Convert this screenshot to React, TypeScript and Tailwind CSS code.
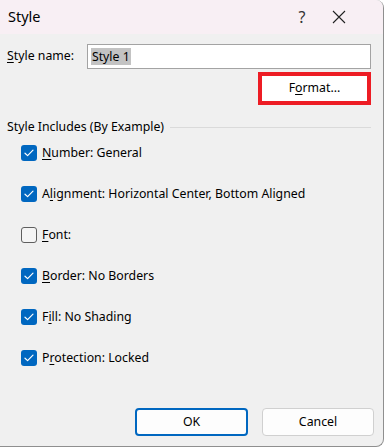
import React from "react";

const items = [
  { pre: "", key: "N", post: "umber: General", checked: true },
  { pre: "A", key: "l", post: "ignment: Horizontal Center, Bottom Aligned", checked: true },
  { pre: "", key: "F", post: "ont:", checked: false },
  { pre: "", key: "B", post: "order: No Borders", checked: true },
  { pre: "F", key: "i", post: "ll: No Shading", checked: true },
  { pre: "P", key: "r", post: "otection: Locked", checked: true },
];

const CheckBox = ({ checked }: { checked: boolean }) =>
  checked ? (
    <div className="w-4 h-4 shrink-0 rounded-[3px] bg-[#0067c0] flex items-center justify-center">
      <svg width="10" height="8" viewBox="0 0 10 8" fill="none">
        <path d="M1 4.2 L3.6 6.6 L9 1.2" stroke="white" strokeWidth="1.2" strokeLinecap="round" strokeLinejoin="round" />
      </svg>
    </div>
  ) : (
    <div className="w-4 h-4 shrink-0 rounded-[3px] border border-[#5f5f5f] bg-[#f5f5f5]" />
  );

export default function App() {
  return (
    <div className="w-[385px] h-[448px] bg-white" style={{ fontFamily: '"Noto Sans", "Open Sans", sans-serif' }}>
      <div className="w-[384px] h-[447px] flex flex-col border-r border-b border-[#8f8f8f] rounded-tr-[8px] rounded-br-[8px] overflow-hidden bg-[#f0f0f0] text-[12.3px] text-black">
        {/* title bar */}
        <div className="h-[34px] shrink-0 flex items-center bg-[#f8eff4]">
          <span className="pl-[8px] text-[14.5px] flex-1">Style</span>
          <span className="w-[14px] text-[16px] text-center text-[#333]">?</span>
          <div className="w-[58px] flex justify-center pl-[1px]">
            <svg width="14" height="14" viewBox="0 0 14 14">
              <path d="M1 1 L13 13 M13 1 L1 13" stroke="#222" strokeWidth="1.1" />
            </svg>
          </div>
          <div className="w-[16px]" />
        </div>

        {/* body */}
        <div className="flex-1 flex flex-col pl-[7px] pr-[12px]">
          <div className="flex items-center mt-[10px]">
            <span className="w-[81px]">
              <span className="underline underline-offset-2">S</span>tyle name:
            </span>
            <div className="w-[288px] h-[25px] border border-[#a3a3a3] bg-white flex items-center px-[3px]">
              <span className="bg-[#c3c3c3] px-[1px] leading-[17px]">Style 1</span>
            </div>
          </div>

          <div className="flex justify-end mt-[3px]">
            <div className="w-[113px] h-[33px] border-4 border-[#ed1c24] bg-white flex items-center justify-center">
              <span>
                F<span className="underline underline-offset-2">o</span>rmat...
              </span>
            </div>
          </div>

          <div className="flex items-center gap-[6px] mt-[14px] leading-[16px]">
            <span>Style Includes (By Example)</span>
            <div className="flex-1 h-px bg-[#dadada]" />
          </div>

          <div className="flex flex-col pl-[14px] mt-[10px]">
            {items.map((it, i) => (
              <div key={i} className="flex items-start gap-[5px] h-[41px]">
                <CheckBox checked={it.checked} />
                <span className="leading-[16px]">
                  {it.pre}
                  <span className="underline underline-offset-2">{it.key}</span>
                  {it.post}
                </span>
              </div>
            ))}
          </div>

          <div className="mt-auto mb-[10px] flex justify-end gap-[14px] mr-[-3px]">
            <div className="w-[113px] h-[28px] rounded-[4px] border-2 border-[#0067c0] bg-[#fdfdfd] flex items-center justify-center">
              OK
            </div>
            <div className="w-[112px] h-[28px] rounded-[4px] border border-[#d0d0d0] bg-[#fdfdfd] flex items-center justify-center">
              Cancel
            </div>
          </div>
        </div>
      </div>
    </div>
  );
}
